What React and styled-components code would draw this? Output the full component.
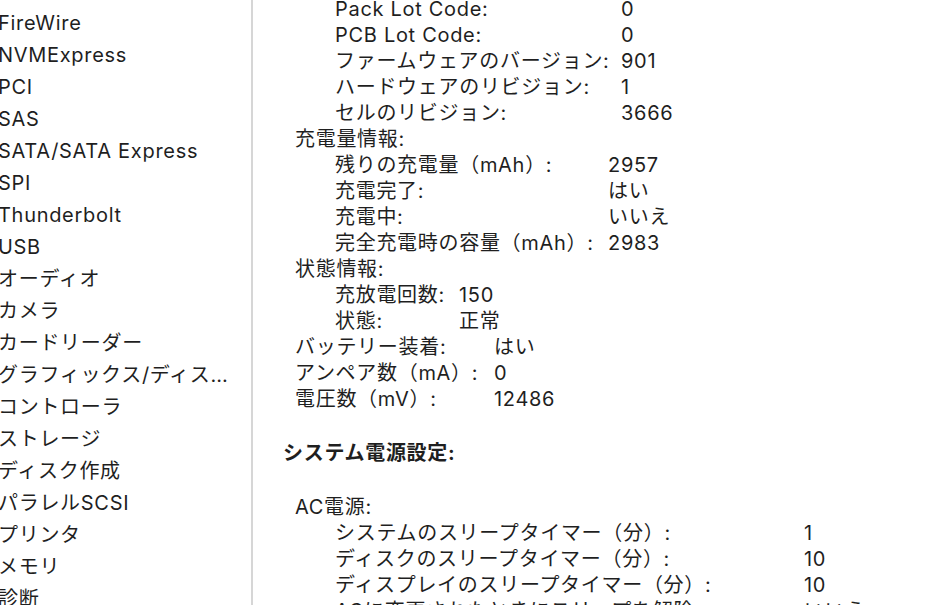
import React from "react";
import styled, { createGlobalStyle } from "styled-components";

const GlobalStyle = createGlobalStyle`
    html, body {
        margin: 0;
        padding: 0;
        background: #ffffff;
        overflow: hidden;
    }
    body {
        font-family: Inter, "Noto Sans CJK JP", sans-serif;
        color: #1f1f1f;
        letter-spacing: 0.7px;
        -webkit-font-smoothing: antialiased;
    }
`;

const sidebarItems = [
    "FireWire",
    "NVMExpress",
    "PCI",
    "SAS",
    "SATA/SATA Express",
    "SPI",
    "Thunderbolt",
    "USB",
    "オーディオ",
    "カメラ",
    "カードリーダー",
    "グラフィックス/ディスプレイ",
    "コントローラ",
    "ストレージ",
    "ディスク作成",
    "パラレルSCSI",
    "プリンタ",
    "メモリ",
    "診断",
];

// each block is either a title line or a label/value group with its own value column
const blocks = [
    {
        level: 2,
        col: 286,
        rows: [
            ["Pack Lot Code:", "0"],
            ["PCB Lot Code:", "0"],
            ["ファームウェアのバージョン:", "901"],
            ["ハードウェアのリビジョン:", "1"],
            ["セルのリビジョン:", "3666"],
        ],
    },
    { level: 1, title: "充電量情報:" },
    {
        level: 2,
        col: 273,
        rows: [
            ["残りの充電量（mAh）:", "2957"],
            ["充電完了:", "はい"],
            ["充電中:", "いいえ"],
            ["完全充電時の容量（mAh）:", "2983"],
        ],
    },
    { level: 1, title: "状態情報:" },
    {
        level: 2,
        col: 124,
        rows: [
            ["充放電回数:", "150"],
            ["状態:", "正常"],
        ],
    },
    {
        level: 1,
        col: 199,
        rows: [
            ["バッテリー装着:", "はい"],
            ["アンペア数（mA）:", "0"],
            ["電圧数（mV）:", "12486"],
        ],
    },
    { heading: "システム電源設定:" },
    { level: 1, title: "AC電源:" },
    {
        level: 2,
        col: 469,
        rows: [
            ["システムのスリープタイマー（分）:", "1"],
            ["ディスクのスリープタイマー（分）:", "10"],
            ["ディスプレイのスリープタイマー（分）:", "10"],
            ["ACに変更されたときにスリープを解除:", "いいえ"],
        ],
    },
];

const indent = { 1: 42, 2: 82 };

function App() {
    return (
        <>
            <GlobalStyle />
            <Window>
                <Sidebar>
                    {sidebarItems.map((item) => (
                        <SidebarItem key={item}>{item}</SidebarItem>
                    ))}
                </Sidebar>
                <Content>
                    <Report>
                        {blocks.map((block, i) => {
                            if (block.heading) {
                                return <Heading key={i}>{block.heading}</Heading>;
                            }
                            if (block.title) {
                                return (
                                    <Title key={i} $indent={indent[block.level]}>
                                        {block.title}
                                    </Title>
                                );
                            }
                            return (
                                <Group key={i} $indent={indent[block.level]} $col={block.col}>
                                    {block.rows.map(([label, value]) => (
                                        <React.Fragment key={label}>
                                            <Label>{label}</Label>
                                            <Value>{value}</Value>
                                        </React.Fragment>
                                    ))}
                                </Group>
                            );
                        })}
                    </Report>
                </Content>
            </Window>
        </>
    );
}

const Window = styled.div`
    display: flex;
    width: 100vw;
    height: 100vh;
    overflow: hidden;
    background: #ffffff;
`;

const Sidebar = styled.nav`
    flex: 0 0 251px;
    border-right: 2px solid #d6d6d6;
    padding-top: 7px;
    overflow: hidden;
`;

const SidebarItem = styled.div`
    height: 32px;
    line-height: 32px;
    font-size: 20px;
    margin-left: -2px;
    padding-right: 22px;
    white-space: nowrap;
    overflow: hidden;
    text-overflow: ellipsis;
`;

const Content = styled.main`
    flex: 1;
    overflow: hidden;
`;

const Report = styled.div`
    margin-top: -4px;
    font-size: 20px;
    line-height: 26px;
`;

const Title = styled.div`
    padding-left: ${(p) => p.$indent}px;
    white-space: nowrap;
`;

const Heading = styled.div`
    padding-left: 30px;
    margin: 28px 0;
    font-weight: 700;
    white-space: nowrap;
`;

const Group = styled.dl`
    display: grid;
    grid-template-columns: ${(p) => p.$col}px auto;
    margin: 0;
    padding-left: ${(p) => p.$indent}px;
`;

const Label = styled.dt`
    white-space: nowrap;
`;

const Value = styled.dd`
    margin: 0;
    white-space: nowrap;
`;

export default App;
